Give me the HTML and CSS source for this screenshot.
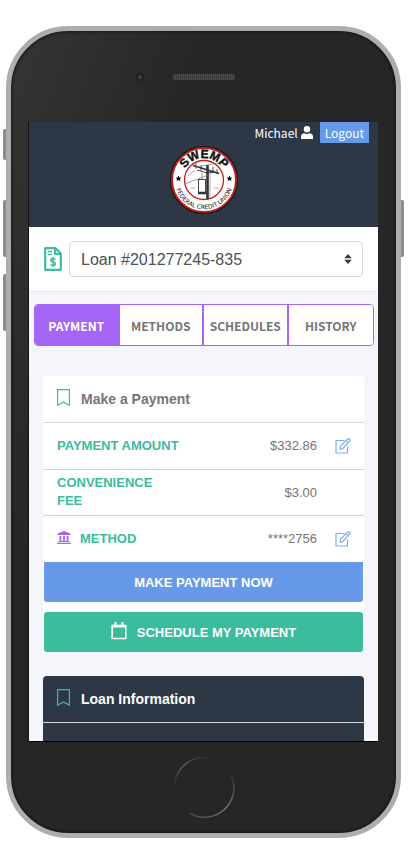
FILE: index.html
```html
<!DOCTYPE html>
<html lang="en">
<head>
<meta charset="utf-8">
<meta name="viewport" content="width=device-width, initial-scale=1">
<title>SWEMP Loan Payment</title>
<link rel="stylesheet" href="styles.css">
</head>
<body>
<svg class="sprite" aria-hidden="true">
  <symbol id="edit" viewBox="0 0 16 16"><path d="M9.500 2.500H1v12.500h11.500V8.500M5 11.300l.6-3.200L12.500 1.200q1-.9 2 0 .9 1 0 2L7.800 10.500zM11 2.700l2.200 2.200" fill="none" stroke="currentColor" stroke-width="1.200" stroke-linejoin="round"/></symbol>
  <symbol id="bookmark" viewBox="0 0 13 17"><path d="M.6.6h11.800v15.600L6.500 13 .6 16.200z" fill="none" stroke="currentColor" stroke-width="1.200"/></symbol>
</svg>
<div class="phone">
  <span class="key key-mute"></span>
  <span class="key key-up"></span>
  <span class="key key-down"></span>
  <span class="key key-power"></span>
  <div class="phone-top"><span class="camera"></span><span class="speaker"></span></div>
  <div class="screen">
    <header class="header">
      <div class="userbar">
        <span>Michael</span>
        <svg class="user-icon" viewBox="0 0 12 13" aria-hidden="true"><circle cx="6" cy="3.300" r="3.200" fill="#fff"/><path d="M0 13v-2.500C0 8.500 1.500 7.400 3.300 7.200c1.700.9 3.700.9 5.400 0C10.500 7.400 12 8.500 12 10.500V13z" fill="#fff"/></svg>
        <button class="logout" type="button">Logout</button>
      </div>
      <svg class="logo" viewBox="0 0 68 68" role="img" aria-label="SWEMP Federal Credit Union">
        <defs>
          <path id="arc-top" d="M12 34a22 22 0 0 1 44 0"/>
          <path id="arc-bottom" d="M4.800 34a29.200 29.200 0 0 0 58.400 0"/>
        </defs>
        <circle cx="34" cy="34" r="34" fill="#111"/>
        <circle cx="34" cy="34" r="32" fill="#fff" stroke="#c3201f" stroke-width="2"/>
        <circle cx="34" cy="34" r="19.500" fill="#fff" stroke="#c3201f" stroke-width="1.300"/>
        <g fill="none" stroke="#333">
          <path d="M37.500 19v34" stroke-width="2.600"/>
          <path d="M40 25v27" stroke="#aaa"/>
          <path d="M23 19.500l26 8" stroke-width="1.600"/>
          <path d="M27 24l10 3 8-1M43 21v6M47 23v5M26 17.500v5M31 19.500v5" stroke-width=".9"/>
          <path d="M15 38l23-9M25 21l24-4M25 24l-7 6M32 27v7" stroke="#777" stroke-width=".7"/>
          <rect x="28.500" y="33.500" width="7" height="13" fill="#fff" stroke-width=".9"/>
          <path d="M28 47h8.500" stroke-width="2.600"/>
        </g>
        <path d="M21 42h4M44 42h5" stroke="#aaa"/>
        <path d="M8.500 29.600l.9 1.900 2.100.2-1.600 1.400.5 2.100-1.900-1.100-1.900 1.100.5-2.100-1.600-1.400 2.100-.2zM59.500 29.600l.9 1.900 2.100.2-1.600 1.400.5 2.100-1.900-1.100-1.900 1.100.5-2.100-1.600-1.400 2.100-.2z" fill="#111"/>
        <text class="logo-name"><textPath href="#arc-top" startOffset="50%">SWEMP</textPath></text>
        <text class="logo-sub"><textPath href="#arc-bottom" startOffset="50%">FEDERAL CREDIT UNION</textPath></text>
      </svg>
    </header>

    <section class="account">
      <label class="account-label" for="loan" aria-label="Loan account">
        <svg class="invoice" viewBox="0 0 18 24" aria-hidden="true">
          <path d="M1.200 1.200h10.300l5.300 5.300v16.300H1.200zM11 1v6h6" fill="none" stroke="#3bbc9d" stroke-width="2.200" stroke-linejoin="round"/>
          <path d="M4 4.500h4M4 7.500h4" stroke="#3bbc9d" stroke-width="1.300"/>
          <path d="M11.500 12.500c-.8-.8-4.800-1.300-4.800.8 0 2.300 4.900 1.200 4.900 3.500 0 2-3.900 1.900-5.200.7M9 10v10" fill="none" stroke="#3bbc9d" stroke-width="1.500"/>
        </svg>
      </label>
      <div class="select-wrap">
        <select id="loan"><option>Loan #201277245-835</option></select>
        <svg class="caret" viewBox="0 0 8 10" aria-hidden="true"><path d="M4 0l3.800 4.200H.2zM4 10L.2 5.800h7.600z" fill="#343a40"/></svg>
      </div>
    </section>

    <nav class="tabs">
      <button type="button" class="tab active">PAYMENT</button>
      <button type="button" class="tab">METHODS</button>
      <button type="button" class="tab">SCHEDULES</button>
      <button type="button" class="tab">HISTORY</button>
    </nav>

    <main class="content">
      <section class="card">
        <h2 class="card-title"><svg class="bookmark" aria-hidden="true"><use href="#bookmark"/></svg>Make a Payment</h2>
        <table class="details">
          <tr><th scope="row">PAYMENT AMOUNT</th><td class="value">$332.86</td><td class="action"><button type="button" aria-label="Edit payment amount"><svg><use href="#edit"/></svg></button></td></tr>
          <tr><th scope="row">CONVENIENCE FEE</th><td class="value">$3.00</td><td class="action"></td></tr>
          <tr><th scope="row"><svg class="bank" viewBox="0 0 14 13" aria-hidden="true"><path d="M7 0l6.500 2.500V4H.5V2.500zM2.500 5h1.800v5H2.500zM6.100 5h1.800v5H6.100zM9.700 5h1.800v5H9.700zM1.500 10h11v1h-11zM0 11.700h14V13H0z" fill="#a565f7"/></svg>METHOD</th><td class="value">****2756</td><td class="action"><button type="button" aria-label="Edit payment method"><svg><use href="#edit"/></svg></button></td></tr>
        </table>
        <div class="buttons">
          <button type="button" class="btn pay">MAKE PAYMENT NOW</button>
          <button type="button" class="btn schedule"><svg class="calendar" viewBox="0 0 16 18" aria-hidden="true"><path d="M1.200 3.500h13.600v13H1.200z" fill="none" stroke="#fff" stroke-width="1.600" stroke-linejoin="round"/><path d="M1 4.500h14M4.500 0v4M11.500 0v4" stroke="#fff" stroke-width="2"/></svg>SCHEDULE MY PAYMENT</button>
        </div>
      </section>
      <section class="card loan-info">
        <h2 class="card-title"><svg class="bookmark" aria-hidden="true"><use href="#bookmark"/></svg>Loan Information</h2>
      </section>
    </main>
  </div>
  <div class="phone-bottom">
    <svg class="home" viewBox="0 0 62 62" aria-hidden="true">
      <defs>
        <linearGradient id="fade-a" x1="0" y1="1" x2="1" y2="0"><stop offset="0" stop-color="#262626"/><stop offset=".5" stop-color="#5a5a5a"/><stop offset="1" stop-color="#262626"/></linearGradient>
        <linearGradient id="fade-b" x1="0" y1="1" x2="1" y2="0"><stop offset="0" stop-color="#444"/><stop offset=".5" stop-color="#777"/><stop offset="1" stop-color="#333"/></linearGradient>
      </defs>
      <path d="M1.500 33A29.500 29.500 0 0 1 36 2" fill="none" stroke="url(#fade-a)" stroke-width="1.500"/>
      <path d="M58 19A29.500 29.500 0 0 1 17 57.500" fill="none" stroke="url(#fade-b)" stroke-width="1.500"/>
    </svg>
  </div>
</div>
</body>
</html>
```
FILE: styles.css
```css
* { box-sizing: border-box; }

body {
  margin: 0;
  padding: 26px 13px 5px 6px;
  height: 100vh;
  background: #fff;
  color: #757575;
  font-family: "Liberation Sans", Arial, sans-serif;
  font-size: 13px;
}

button, select { font: inherit; color: inherit; margin: 0; }
button { cursor: pointer; }
.sprite { display: none; }

.phone {
  position: relative;
  display: flex;
  flex-direction: column;
  height: 100%;
  padding: 0 18px;
  border: 5px solid #adadad;
  border-radius: 62px;
  background: linear-gradient(110deg, #353535, #262626 30%);
  box-shadow: inset 0 0 3px 1px #151515;
}

.key {
  position: absolute;
  left: -8px;
  width: 3px;
  height: 57px;
  border-radius: 2px 0 0 2px;
  background: #8c8c8c;
}
.key-mute { top: 98px; height: 31px; }
.key-up { top: 169px; }
.key-down { top: 243px; }
.key-power { top: 169px; left: auto; right: -8px; border-radius: 0 2px 2px 0; }

.phone-top {
  display: grid;
  grid-template-columns: 1fr 62px 1fr;
  align-items: center;
  height: 91px;
}
.camera {
  justify-self: end;
  width: 8px;
  height: 8px;
  margin-right: 29px;
  border: 2px solid #1f1f26;
  border-radius: 50%;
  background: #45454e;
}
.speaker {
  height: 6px;
  border-radius: 2px;
  background: repeating-linear-gradient(90deg, #4c4c4c 0 1px, #3c3c3c 1px 2px);
}

.screen {
  flex: 1;
  min-height: 0;
  overflow: hidden;
  background: #f5f6fb;
  box-shadow: 0 1px #000, -1px 0 #111;
}

.header {
  height: 105px;
  background: #2d3745;
  color: #fff;
  text-align: center;
}
.userbar {
  display: flex;
  align-items: center;
  justify-content: flex-end;
  padding-right: 9px;
  font-family: "Noto Sans CJK SC", sans-serif;
  font-size: 12px;
  line-height: 21px;
}
.user-icon { width: 12px; height: 13px; margin: 0 7px 0 3px; }
.logout {
  height: 21px;
  padding: 0 5px;
  border: 0;
  background: #669ae8;
  line-height: 21px;
}
.logo { display: block; width: 68px; height: 68px; margin: 3px auto 0 141px; }
.logo text { fill: #111; text-anchor: middle; }
.logo-name { font-size: 12px; font-weight: bold; stroke: #111; stroke-width: .4; }
.logo-sub { font-family: "DejaVu Sans", sans-serif; font-size: 6px; }

.account {
  display: flex;
  align-items: flex-start;
  height: 65px;
  padding: 14px 15px;
  border-bottom: 1px solid #e9ebf0;
  border-radius: 0 0 4px 4px;
  background: #fff;
}
.account-label { display: block; padding: 6px 7px 0 0; }
.invoice { display: block; width: 18px; height: 24px; }
.select-wrap { position: relative; flex: 1; }
select {
  appearance: none;
  width: 100%;
  height: 36px;
  padding: 0 11px;
  border: 1px solid #d5dade;
  border-radius: 4px;
  background: #fff;
  color: #495057;
  font-size: 16px;
}
.caret {
  position: absolute;
  top: 13px;
  right: 11px;
  width: 8px;
  height: 10px;
  pointer-events: none;
}

.tabs {
  display: grid;
  grid-template-columns: repeat(4, 1fr);
  height: 42px;
  margin: 12px 4px 0 5px;
  border: 1px solid #a565f7;
  border-radius: 4px;
  overflow: hidden;
  background: #fff;
}
.tab {
  padding: 0;
  border: 0;
  border-right: 2px solid #a565f7;
  background: #fff;
  font-family: "Noto Sans CJK SC", sans-serif;
  font-size: 12px;
  font-weight: bold;
}
.tab:last-child { border-right: 0; }
.tab.active { background: #a565f7; color: #fff; }

.content { padding: 30px 14px 0; }
.card {
  border-radius: 4px;
  background: #fff;
}
.card-title {
  display: flex;
  align-items: center;
  height: 47px;
  margin: 0;
  padding: 0 14px;
  border-bottom: 1px solid #d6d9de;
  font-size: 14px;
}
.bookmark { width: 13px; height: 17px; margin: 0 11px 3px 0; color: #3bbc9d; }

.details {
  width: 100%;
  border-collapse: collapse;
  table-layout: fixed;
}
.details tr { height: 46px; border-bottom: 1px solid #d2d2d2; }
.details tr:last-child { height: 47px; border-bottom: 0; }
.details th {
  width: 138px;
  padding: 0 0 0 14px;
  color: #3bbc9d;
  line-height: 18px;
  text-align: left;
}
.details td { padding: 0; }
.value { text-align: right; }
.details .action { width: 47px; }
.action button {
  display: flex;
  margin-left: 18px;
  padding: 0;
  border: 0;
  background: none;
  color: #80aaf0;
}
.action svg { width: 16px; height: 16px; }
.bank { width: 14px; height: 13px; margin-right: 9px; vertical-align: -1px; }

.buttons { display: grid; gap: 10px; padding: 0 1px; }
.btn {
  display: flex;
  align-items: center;
  justify-content: center;
  height: 40px;
  padding: 0;
  border: 0;
  border-radius: 3px;
  color: #fff;
  font-weight: bold;
}
.pay { border-radius: 0 0 3px 3px; background: #669ae8; }
.schedule { background: #3bbc9d; }
.calendar { width: 16px; height: 18px; margin: 0 10px 3px 0; }

.loan-info {
  height: 200px;
  margin-top: 24px;
  background: #2d3745;
  color: #fff;
}

.phone-bottom {
  display: flex;
  justify-content: center;
  height: 92px;
  padding-top: 15px;
}
.home { width: 62px; height: 62px; }
```
